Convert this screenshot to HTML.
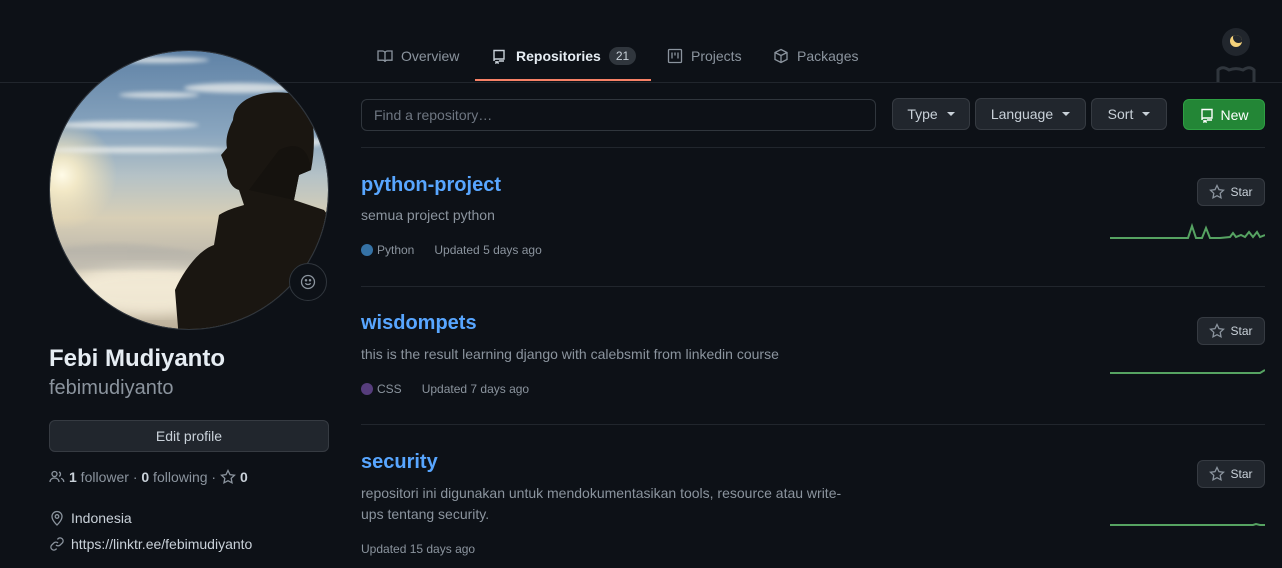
<!DOCTYPE html>
<html><head><meta charset="utf-8"><style>
*{margin:0;padding:0;box-sizing:border-box}
body{width:1282px;height:568px;background:#0d1117;font-family:"Liberation Sans",sans-serif;color:#c9d1d9;position:relative;overflow:hidden;font-size:14px}
.a{position:absolute}
.muted{color:#8b949e}
.btn{position:absolute;background:#21262d;border:1px solid #363b42;border-radius:6px;color:#c9d1d9;font-size:14px;display:flex;align-items:center;justify-content:center}
.caret{display:inline-block;width:0;height:0;border-left:4px solid transparent;border-right:4px solid transparent;border-top:4px solid #c9d1d9;margin-left:9px}
.sep{position:absolute;left:361px;width:904px;height:1px;background:#21262d}
.name{position:absolute;left:361px;color:#58a6ff;font-weight:bold;font-size:20px}
.desc{position:absolute;left:361px;color:#8b949e;font-size:14px;line-height:21px}
.meta{position:absolute;left:361px;color:#8b949e;font-size:12px;display:flex;align-items:center}
.dot{width:12px;height:12px;border-radius:50%;display:inline-block;margin-right:4px}
.star{position:absolute;left:1197px;width:68px;height:28px;font-size:12px}
</style></head><body>
<div class="a" style="left:0;top:82px;width:1282px;height:1px;background:#21262d"></div>
<div class="a" style="left:377px;top:48px;display:flex;align-items:center;color:#8b949e;font-size:14px">
<svg width="16" height="16" viewBox="0 0 16 16" fill="none" stroke="#8b949e" stroke-width="1.3"><path d="M1 3h4.5c1.4 0 2.5 1 2.5 2.3V14c0-1-1-1.8-2.3-1.8H1zM15 3h-4.5C9.1 3 8 4 8 5.3V14c0-1 1-1.8 2.3-1.8H15z"/></svg>
<span style="margin-left:8px">Overview</span></div>
<div class="a" style="left:491px;top:47px;display:flex;align-items:center;font-size:14px">
<svg width="16" height="16" viewBox="0 0 16 16" fill="none" stroke="#c9d1d9" stroke-width="1.4"><path d="M3 13V2.5h10V11H4.5M3 12.5c0-1 .7-1.5 1.5-1.5M5 13v2l1-.8 1 .8v-2M8 13h5"/></svg>
<b style="margin-left:9px;color:#e6edf3">Repositories</b>
<span style="margin-left:8px;background:#30363d;border-radius:10px;padding:2px 7px;font-size:12px;color:#c9d1d9">21</span></div>
<div class="a" style="left:475px;top:79px;width:176px;height:2px;background:#f78166"></div>
<div class="a" style="left:667px;top:48px;display:flex;align-items:center;color:#8b949e">
<svg width="16" height="16" viewBox="0 0 16 16" fill="none" stroke="#8b949e" stroke-width="1.3"><rect x="1.5" y="1.5" width="13" height="13" rx="1"/><path d="M5 4.5v6M8 4.5v3M11 4.5v6"/></svg>
<span style="margin-left:8px">Projects</span></div>
<div class="a" style="left:773px;top:48px;display:flex;align-items:center;color:#8b949e">
<svg width="16" height="16" viewBox="0 0 16 16" fill="none" stroke="#8b949e" stroke-width="1.3"><path d="M8 1.5l6 3v7l-6 3-6-3v-7zM2 4.5l6 3 6-3M8 7.5v7"/></svg>
<span style="margin-left:8px">Packages</span></div>
<div class="a" style="left:1222px;top:28px;width:28px;height:28px;border-radius:50%;background:#21262d"></div>
<div class="a" style="left:1230px;top:35px;width:12px;height:12px;border-radius:50%;background:#f5d27a;overflow:hidden"><div style="position:absolute;left:3px;top:-3px;width:11px;height:11px;border-radius:50%;background:#21262d"></div></div>
<svg class="a" style="left:1216px;top:64px" width="40" height="20" viewBox="0 0 40 20" fill="none" stroke="#30363d" stroke-width="3"><path d="M2 18V6c4-4 8-2 11 0 5-2 9-2 14 0 3-2 7-4 11 0v12"/></svg>
<!-- avatar -->
<svg class="a" style="left:49px;top:50px" width="280" height="280" viewBox="0 0 280 280">
<defs>
<clipPath id="c"><circle cx="140" cy="140" r="139"/></clipPath>
<linearGradient id="sky" x1="0" y1="0" x2="0" y2="1">
<stop offset="0" stop-color="#5f82a6"/><stop offset=".3" stop-color="#8aa6bf"/><stop offset=".45" stop-color="#b5c2c6"/><stop offset=".6" stop-color="#d8cfb6"/><stop offset=".72" stop-color="#c2bcae"/><stop offset=".85" stop-color="#e6dcc6"/><stop offset="1" stop-color="#b8ac96"/></linearGradient>
<radialGradient id="sun"><stop offset="0" stop-color="#fffbe8"/><stop offset=".3" stop-color="#fff1c8" stop-opacity=".8"/><stop offset="1" stop-color="#ffe6b0" stop-opacity="0"/></radialGradient>
<filter id="b"><feGaussianBlur stdDeviation="2"/></filter>
<filter id="b2"><feGaussianBlur stdDeviation="6"/></filter>
</defs>
<g clip-path="url(#c)">
<rect width="280" height="280" fill="url(#sky)"/>
<circle cx="13" cy="125" r="55" fill="url(#sun)"/>
<g fill="#eef0ee" opacity=".75" filter="url(#b)">
<ellipse cx="110" cy="10" rx="50" ry="3"/><ellipse cx="190" cy="38" rx="55" ry="5"/><ellipse cx="110" cy="45" rx="40" ry="3"/>
<ellipse cx="80" cy="75" rx="70" ry="4"/><ellipse cx="90" cy="100" rx="90" ry="3"/><ellipse cx="260" cy="92" rx="15" ry="4"/>
</g>
<ellipse cx="100" cy="240" rx="80" ry="25" fill="#f4ecd8" opacity=".85" filter="url(#b2)"/>
<path d="M0,200 C60,190 100,192 160,205 L160,220 L0,220Z" fill="#a8a9a6" opacity=".35" filter="url(#b)"/>
<path d="M184,70 C186,45 220,38 250,45 C265,55 268,90 262,120 L250,125 L245,150 L275,160 L290,180 L290,290 L130,290 L126,240 C135,220 150,200 165,195 L170,165 C178,160 185,158 195,155 L190,140 C182,138 178,128 178,120 L172,105 L178,98 C176,88 180,78 184,70 Z" fill="#1a1611"/>
<path d="M200,140 L245,150 L250,125 L262,120 C260,100 250,90 230,100Z" fill="#15120e"/>
</g>
<circle cx="140" cy="140" r="139.5" fill="none" stroke="#30363d"/>
</svg>
<div class="a" style="left:289px;top:263px;width:38px;height:38px;border-radius:50%;background:#0d1117;border:1px solid #30363d;display:flex;align-items:center;justify-content:center">
<svg width="16" height="16" viewBox="0 0 16 16" fill="none" stroke="#8b949e" stroke-width="1.3"><circle cx="8" cy="8" r="6.5"/><path d="M5.3 9.3c1.4 1.6 4 1.6 5.4 0"/><circle cx="6" cy="6.3" r=".6" fill="#8b949e"/><circle cx="10" cy="6.3" r=".6" fill="#8b949e"/></svg></div>
<div class="a" style="left:49px;top:345px;font-size:24px;font-weight:bold;color:#e6edf3">Febi Mudiyanto</div>
<div class="a muted" style="left:49px;top:377px;font-size:20px;font-weight:300">febimudiyanto</div>
<div class="btn" style="left:49px;top:420px;width:280px;height:32px">Edit profile</div>
<div class="a muted" style="left:49px;top:469px;display:flex;align-items:center;font-size:14px">
<svg width="16" height="16" viewBox="0 0 16 16" fill="none" stroke="#8b949e" stroke-width="1.3"><circle cx="5.5" cy="5" r="2.5"/><path d="M1 13c0-2.5 2-4 4.5-4s4.5 1.5 4.5 4M10 3a2.3 2.3 0 010 4.3M12 9.3c1.6.6 2.8 1.8 2.8 3.7"/></svg>
<b style="color:#c9d1d9;margin-left:4px">1</b>&nbsp;follower&nbsp;·&nbsp;<b style="color:#c9d1d9">0</b>&nbsp;following&nbsp;·&nbsp;
<svg width="16" height="16" viewBox="0 0 16 16" fill="none" stroke="#8b949e" stroke-width="1.3"><path d="M8 1.5l2 4.1 4.5.6-3.3 3.1.8 4.5L8 11.7l-4 2.1.8-4.5L1.5 6.2 6 5.6z"/></svg>
<b style="color:#c9d1d9;margin-left:4px">0</b></div>
<div class="a" style="left:49px;top:510px;display:flex;align-items:center">
<svg width="16" height="16" viewBox="0 0 16 16" fill="none" stroke="#8b949e" stroke-width="1.3"><path d="M8 15s5-4.5 5-8.5a5 5 0 00-10 0C3 10.5 8 15 8 15z"/><circle cx="8" cy="6.5" r="1.8"/></svg>
<span style="margin-left:6px">Indonesia</span></div>
<div class="a" style="left:49px;top:536px;display:flex;align-items:center">
<svg width="16" height="16" viewBox="0 0 16 16" fill="none" stroke="#8b949e" stroke-width="1.3"><path d="M7 9a3 3 0 004.2 0l2.3-2.3a3 3 0 00-4.2-4.2L8.4 3.4M9 7a3 3 0 00-4.2 0L2.5 9.3a3 3 0 004.2 4.2l.9-.9"/></svg>
<span style="margin-left:6px">https://linktr.ee/febimudiyanto</span></div>
<div class="a" style="left:361px;top:99px;width:515px;height:32px;border:1px solid #30363d;border-radius:6px;background:#0d1117;color:#6e7681;padding:7px 12px">Find a repository…</div>
<div class="btn" style="left:892px;top:98px;width:78px;height:32px">Type<span class="caret"></span></div>
<div class="btn" style="left:975px;top:98px;width:111px;height:32px">Language<span class="caret"></span></div>
<div class="btn" style="left:1091px;top:98px;width:76px;height:32px">Sort<span class="caret"></span></div>
<div class="btn" style="left:1183px;top:99px;width:82px;height:31px;background:#238636;border-color:#2ea043;color:#fff">
<svg width="16" height="16" viewBox="0 0 16 16" fill="none" stroke="#fff" stroke-width="1.4"><path d="M3 13V2.5h10V11H4.5M3 12.5c0-1 .7-1.5 1.5-1.5M5 13v2l1-.8 1 .8v-2M8 13h5"/></svg><span style="margin-left:5px">New</span></div>
<div class="sep" style="top:147px"></div>
<div class="name" style="top:174px">python-project</div>
<div class="desc" style="top:205px">semua project python</div>
<div class="meta" style="top:243px"><span class="dot" style="background:#3572a5"></span>Python<span style="margin-left:20px">Updated 5 days ago</span></div>
<div class="btn star" style="top:178px"><svg width="16" height="16" viewBox="0 0 16 16" fill="none" stroke="#8b949e" stroke-width="1.3"><path d="M8 1.5l2 4.1 4.5.6-3.3 3.1.8 4.5L8 11.7l-4 2.1.8-4.5L1.5 6.2 6 5.6z"/></svg><span style="margin-left:5px">Star</span></div>
<svg class="a" style="left:1110px;top:218px" width="155" height="25"><polyline fill="none" stroke="#56a362" stroke-width="2" points="0,20 78,20 82,8 86,20 92,20 96,10 100,20 110,20 120,19 123,15 126,19 131,17 135,19 139,14 143,19 147,14 150,19 155,17"/></svg>
<div class="sep" style="top:286px"></div>
<div class="name" style="top:312px">wisdompets</div>
<div class="desc" style="top:344px">this is the result learning django with calebsmit from linkedin course</div>
<div class="meta" style="top:382px"><span class="dot" style="background:#563d7c"></span>CSS<span style="margin-left:20px">Updated 7 days ago</span></div>
<div class="btn star" style="top:317px"><svg width="16" height="16" viewBox="0 0 16 16" fill="none" stroke="#8b949e" stroke-width="1.3"><path d="M8 1.5l2 4.1 4.5.6-3.3 3.1.8 4.5L8 11.7l-4 2.1.8-4.5L1.5 6.2 6 5.6z"/></svg><span style="margin-left:5px">Star</span></div>
<svg class="a" style="left:1110px;top:362px" width="155" height="15"><polyline fill="none" stroke="#56a362" stroke-width="2" points="0,11 150,11 155,8"/></svg>
<div class="sep" style="top:424px"></div>
<div class="name" style="top:451px">security</div>
<div class="desc" style="top:483px;width:490px">repositori ini digunakan untuk mendokumentasikan tools, resource atau write-ups tentang security.</div>
<div class="meta" style="top:542px">Updated 15 days ago</div>
<div class="btn star" style="top:460px"><svg width="16" height="16" viewBox="0 0 16 16" fill="none" stroke="#8b949e" stroke-width="1.3"><path d="M8 1.5l2 4.1 4.5.6-3.3 3.1.8 4.5L8 11.7l-4 2.1.8-4.5L1.5 6.2 6 5.6z"/></svg><span style="margin-left:5px">Star</span></div>
<svg class="a" style="left:1110px;top:515px" width="155" height="15"><polyline fill="none" stroke="#56a362" stroke-width="2" points="0,10 143,10 146,9 150,10 155,10"/></svg>
</body></html>
